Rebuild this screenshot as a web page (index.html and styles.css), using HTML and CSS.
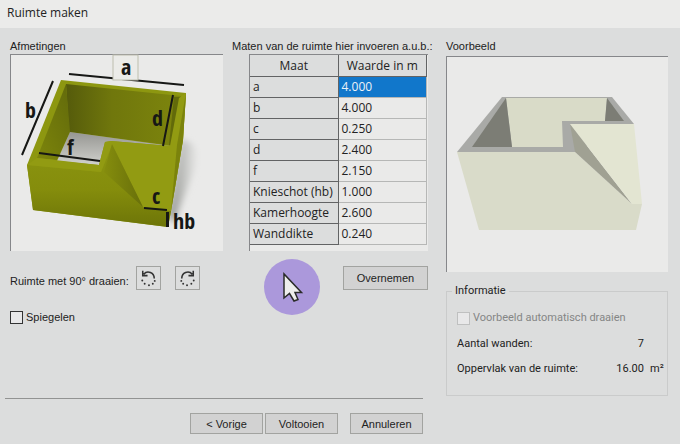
FILE: index.html
```html
<!DOCTYPE html>
<html lang="nl">
<head>
<meta charset="utf-8">
<title>Ruimte maken</title>
<link rel="stylesheet" href="styles.css">
</head>
<body>
<header class="titlebar"><h1>Ruimte maken</h1></header>
<main class="dialog">
  <form class="editor">
    <div class="panels">
      <section class="dimensions">
        <h2>Afmetingen</h2>
        <div class="frame">
          <svg class="drawing" viewBox="11 55 212 196" role="img" aria-label="Afmetingen van de ruimte">
            <defs>
              <linearGradient id="front" x1="0" y1="0" x2="0" y2="1"><stop offset="0" stop-color="#8b9511"/><stop offset=".55" stop-color="#858d0c"/><stop offset="1" stop-color="#6d7508"/></linearGradient>
              <linearGradient id="back" x1="0" y1="0" x2="1" y2="0"><stop offset="0" stop-color="#555b0b"/><stop offset=".4" stop-color="#70770c"/><stop offset="1" stop-color="#7d850d"/></linearGradient>
              <linearGradient id="side" x1="1" y1="0" x2="0" y2="1"><stop offset="0" stop-color="#626a0b"/><stop offset="1" stop-color="#7d850b"/></linearGradient>
              <linearGradient id="floor" x1="0" y1="0" x2="0" y2="1"><stop offset="0" stop-color="#969692"/><stop offset="1" stop-color="#d0d1cd"/></linearGradient>
              <linearGradient id="slope" x1="0" y1="0" x2="1" y2="0"><stop offset="0" stop-color="#858d0d"/><stop offset="1" stop-color="#686f0a"/></linearGradient>
              <linearGradient id="shade" x1="0" y1="0" x2="1" y2="0"><stop offset="0" stop-color="#929490"/><stop offset="1" stop-color="#eaeae9"/></linearGradient>
              <filter id="soft"><feGaussianBlur stdDeviation="3"/></filter>
            </defs>
            <path d="M181 139L191 143Q201 152 196 165L174 224L168 215Z" fill="url(#shade)" filter="url(#soft)"/>
            <path d="M61 80L186 93L183 140L171 211L168 227L33 210L27 165Z" fill="#8d9710"/>
            <path d="M66 84L181 96L175 146L69 132Z" fill="url(#back)"/>
            <path d="M66 84L70 132L57 160L37 158Z" fill="url(#side)"/>
            <path d="M70 132L171 146L111 141L105 142L99 165L57 161Z" fill="url(#floor)"/>
            <path d="M174 97L181 97L175 146L169 145Z" fill="#626a0a"/>
            <path d="M27 165L101 172L112 143L143 207L171 211L168 227L33 210Z" fill="url(#front)"/>
            <path d="M37 158L99 165L105 142L111 141L170 146L179 98L186 93L183 140L171 211L143 207L112 145L101 172L27 165Z" fill="#929b12"/>
            <path d="M112 144L143 207L104 172Z" fill="url(#slope)"/>
            <path d="M186 93L183 140L171 211L177 145Z" fill="#7b830c"/>
            <g stroke="#161715" stroke-width="2"><path d="M69 74L184 85M53 81L22 155M173 95L163 146M39 153L100 161M144 208L167 210"/><path d="M167.500 212V227" stroke-width="3"/></g>
            <rect x="113" y="55" width="25" height="25" fill="#ebebe8" stroke="#bdbeae"/>
            <g class="measure"><text x="121" y="75">a</text><text x="25" y="118">b</text><text x="152" y="126">d</text><text x="67" y="155">f</text><text x="152" y="204">c</text><text x="173" y="229">hb</text></g>
          </svg>
        </div>
      </section>
      <section class="sizes">
        <h2>Maten van de ruimte hier invoeren a.u.b.:</h2>
        <div class="frame grid-frame">
          <table>
            <thead><tr><th scope="col">Maat</th><th scope="col">Waarde in m</th></tr></thead>
            <tbody>
              <tr><th scope="row">a</th><td class="selected">4.000</td></tr>
              <tr><th scope="row">b</th><td>4.000</td></tr>
              <tr><th scope="row">c</th><td>0.250</td></tr>
              <tr><th scope="row">d</th><td>2.400</td></tr>
              <tr><th scope="row">f</th><td>2.150</td></tr>
              <tr><th scope="row">Knieschot (hb)</th><td>1.000</td></tr>
              <tr><th scope="row">Kamerhoogte</th><td>2.600</td></tr>
              <tr><th scope="row">Wanddikte</th><td>0.240</td></tr>
            </tbody>
          </table>
        </div>
      </section>
    </div>
    <div class="actions">
      <span class="rotate-label">Ruimte met 90° draaien:</span>
      <button type="button" class="rotate" aria-label="Linksom draaien">
        <svg viewBox="0 0 24 24"><path d="M7 7.500C11 3 18 6 18 12M6 4v5h5" fill="none" stroke="#333" stroke-width="1.600"/><g fill="#333"><circle cx="5.500" cy="14" r="1"/><circle cx="8" cy="17.500" r="1"/><circle cx="12.500" cy="19" r="1"/><circle cx="16.500" cy="17.500" r="1"/><circle cx="18.500" cy="14.500" r="1"/></g></svg>
      </button>
      <button type="button" class="rotate" aria-label="Rechtsom draaien">
        <svg viewBox="0 0 24 24"><path d="M17 7.500C13 3 6 6 6 12M18 4v5h-5" fill="none" stroke="#333" stroke-width="1.600"/><g fill="#333"><circle cx="18.500" cy="14" r="1"/><circle cx="16" cy="17.500" r="1"/><circle cx="11.500" cy="19" r="1"/><circle cx="7.500" cy="17.500" r="1"/><circle cx="5.500" cy="14.500" r="1"/></g></svg>
      </button>
      <button type="button" class="apply">Overnemen</button>
    </div>
    <label class="check"><input type="checkbox">Spiegelen</label>
    <footer>
      <button type="button">&lt; Vorige</button>
      <button type="button">Voltooien</button>
      <button type="button" class="cancel">Annuleren</button>
    </footer>
  </form>
  <aside class="preview">
    <h2>Voorbeeld</h2>
    <div class="frame">
      <svg class="drawing" viewBox="447 57 221 215" role="img" aria-label="Voorbeeld van de ruimte">
        <path d="M502 97H612L634 124L575 152H457Z" fill="#a9aaa7"/>
        <path d="M506 98H607L605 121H562L563 147H512Z" fill="#d9dbc8"/>
        <path d="M506 98L512 147H472Z" fill="#7c7d75"/>
        <path d="M607 98L624 121H605Z" fill="#7c7d75"/>
        <path d="M457 152H575L632 204H642L636 230H479Z" fill="#d9dbc9"/>
        <path d="M570 124L632 204L575 152Z" fill="#a0a193"/>
        <path d="M570 124H634L642 204H632Z" fill="#e3e5d2"/>
      </svg>
    </div>
    <fieldset>
      <legend>Informatie</legend>
      <label class="check disabled"><input type="checkbox" disabled>Voorbeeld automatisch draaien</label>
      <dl>
        <div><dt>Aantal wanden:</dt><dd>7</dd><dd class="unit"></dd></div>
        <div><dt>Oppervlak van de ruimte:</dt><dd>16.00</dd><dd class="unit">m²</dd></div>
      </dl>
    </fieldset>
  </aside>
</main>
<svg class="pointer" viewBox="0 0 56 56" aria-hidden="true"><circle cx="28" cy="28" r="28" fill="#ab98db"/><path d="M20 15V39L25.500 34.500L30 42L34 40.500L31 33.500H37.500Z" fill="#eeeeec" stroke="#2a2b29" stroke-width="1.500"/></svg>
</body>
</html>
```
FILE: styles.css
```css
* { box-sizing: border-box; }

body {
  margin: 0;
  min-height: 100vh;
  display: flex;
  flex-direction: column;
  background: #dcdddd;
  color: #222;
  font: 11px/16px "Liberation Sans", sans-serif;
}

h1, h2 { margin: 0; font-weight: 400; }

.titlebar {
  height: 28px;
  padding: 5px 7px;
  background: #ebebea;
}

h1 { font: 12px/16px "Open Sans", sans-serif; }

h2 {
  height: 16px;
  font-size: 11px;
  line-height: 16px;
  white-space: nowrap;
}

.dialog {
  flex: 1;
  display: grid;
  grid-template-columns: minmax(0, 428fr) minmax(0, 252fr);
}

.editor {
  display: flex;
  flex-direction: column;
  padding: 10px 0;
}

.panels {
  display: grid;
  grid-template-columns: minmax(0, 213fr) minmax(0, 196fr);
  gap: 9px;
  padding-left: 10px;
}

.dimensions, .sizes { display: flex; flex-direction: column; }

.frame {
  flex: 1;
  background: #eaeae9;
  border-top: 1px solid #86878a;
  border-left: 1px solid #86878a;
}

.drawing { display: block; width: 100%; overflow: visible; }

.measure {
  font: bold 22px "Liberation Sans Narrow", "Open Sans Condensed", "DejaVu Sans Condensed", sans-serif;
  fill: #161715;
}

.grid-frame { margin-left: 17px; padding-right: 1px; }

table {
  width: 100%;
  border-collapse: separate;
  border-spacing: 0;
  table-layout: fixed;
  font: 12px/20px "Open Sans", sans-serif;
}

th, td {
  height: 21px;
  padding: 0 3px;
  border-right: 1px solid #b6b7b6;
  border-bottom: 1px solid #b6b7b6;
  font-weight: 400;
  text-align: left;
  white-space: nowrap;
}

th {
  background: #dcdddd;
  border-color: #626364;
}

thead th { height: 22px; text-align: center; }

.selected { background: #1177cb; color: #edf2f7; }

.actions {
  display: flex;
  align-items: center;
  margin-top: 15px;
  padding-left: 10px;
}

.rotate-label { width: 126px; padding-top: 6px; white-space: nowrap; }

button {
  width: 73px;
  height: 21px;
  padding: 0;
  background: #d2d2d2;
  border: 1px solid #a2a3a0;
  color: #222;
  font: 11px/16px "Liberation Sans", sans-serif;
}

.rotate {
  width: 25px;
  height: 24px;
  margin-right: 14px;
  background: #dcdddd;
}

.rotate svg { display: block; width: 100%; }

.apply { width: 85px; height: 24px; margin-left: auto; }

.check { display: flex; align-items: center; gap: 3px; }

.check input {
  appearance: none;
  width: 13px;
  height: 13px;
  margin: 0;
  background: #e8e8e9;
  border: 1px solid #333;
}

.editor .check { margin: 19px 0 0 10px; }

footer {
  display: flex;
  gap: 2px;
  justify-content: flex-end;
  margin: auto 5px 0;
  padding-top: 14px;
  border-top: 1px solid #929392;
}

.cancel { margin-left: 10px; }

.preview { padding: 10px 12px 0 18px; }

.preview .frame { margin-top: 2px; }

fieldset {
  min-width: 0;
  height: 113px;
  margin: 11px 0 0;
  padding: 11px 3px 0 10px;
  border: 1px solid #cacbcb;
  font: 11px/16px Roboto, sans-serif;
}

legend { margin-left: -5px; padding: 0 3px; }

.disabled { color: #858686; }

.check.disabled input { border-color: #bfc0c0; }

dl { margin: 10px 0 0; }

dl div { display: flex; margin-bottom: 9px; }

dt { flex: 1; white-space: nowrap; }

dd { margin: 0; }

.unit { width: 20px; padding-left: 6px; }

.pointer {
  position: absolute;
  left: 264px;
  top: 259px;
  width: 56px;
}
```
